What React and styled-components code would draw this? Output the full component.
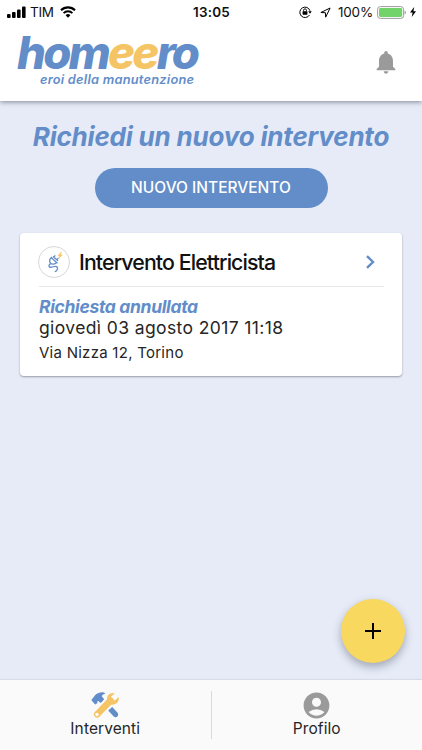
import React from 'react';
import styled, { createGlobalStyle, ThemeProvider } from 'styled-components';
import { MdNotifications, MdAccountCircle } from 'react-icons/md';

const theme = {
  color: {
    primary: '#628dc9',
    accent: '#f5c464',
    fab: '#f9d85f',
    background: '#e6ebf7',
    grey: '#9a9a9a',
    text: '#262626'
  }
};

const GlobalStyle = createGlobalStyle`
  *, *::before, *::after {
    box-sizing: border-box;
  }

  body {
    margin: 0;
    font-family: Inter, 'Liberation Sans', sans-serif;
    overflow: hidden;
  }
`;

const Screen = styled.div`
  width: 422px;
  height: 750px;
  display: flex;
  flex-direction: column;
  position: relative;
  background-color: ${({ theme }) => theme.color.background};
  color: ${({ theme }) => theme.color.text};
`;

const StyledHeader = styled.header`
  height: 101px;
  flex-shrink: 0;
  background-color: #fff;
  box-shadow: 0 1px 5px rgba(60, 65, 85, 0.6);
`;

const StatusBar = styled.div`
  height: 24px;
  padding: 0 6px 0 7px;
  display: grid;
  grid-template-columns: 1fr auto 1fr;
  align-items: center;
  color: #111;
`;

const StatusGroup = styled.div`
  display: flex;
  align-items: center;
  justify-content: ${({ $end }) => ($end ? 'flex-end' : 'flex-start')};
`;

const StatusText = styled.span`
  font-size: 13.5px;
  line-height: 24px;
  font-weight: ${({ $bold }) => ($bold ? 600 : 400)};
  letter-spacing: ${({ $spacing }) => $spacing || '0'};
  margin: ${({ $margin }) => $margin || '0'};
`;

const StatusIcon = styled.svg`
  display: block;
  flex-shrink: 0;
  margin-right: ${({ $gap }) => $gap || 0}px;
`;

const Brand = styled.div`
  height: 77px;
  display: flex;
  justify-content: space-between;
  align-items: flex-start;
  padding: 0 22px 0 14px;
`;

const Logo = styled.svg`
  display: block;
  font-family: Inter, sans-serif;
  font-style: italic;
  font-feature-settings: 'cv11';
  fill: ${({ theme }) => theme.color.primary};
`;

const LogoName = styled.text`
  font-size: 45.5px;
  font-weight: 800;
`;

const LogoAccent = styled.tspan`
  fill: ${({ theme }) => theme.color.accent};
`;

const LogoClaim = styled.text`
  font-size: 12.8px;
  font-weight: 600;
`;

const BellIcon = styled(MdNotifications)`
  width: 28px;
  height: 28px;
  margin-top: 24px;
  color: ${({ theme }) => theme.color.grey};
`;

const Content = styled.main`
  flex: 1;
  display: flex;
  flex-direction: column;
  align-items: center;
  padding: 18px 20px 0;
`;

const Heading = styled.h1`
  margin: 0 0 13.5px;
  font-size: 26px;
  line-height: 35px;
  font-weight: 700;
  font-style: italic;
  letter-spacing: -0.2px;
  white-space: nowrap;
  color: ${({ theme }) => theme.color.primary};
`;

const PrimaryButton = styled.button`
  width: 233px;
  height: 40.5px;
  padding: 0;
  border: none;
  border-radius: 21px;
  background-color: ${({ theme }) => theme.color.primary};
  color: #fff;
  font: 500 15.5px/40px Inter, sans-serif;
  letter-spacing: 0;
`;

const Card = styled.article`
  width: 382px;
  height: 142.5px;
  margin: 25px 0 0;
  padding: 0 18px 0 19px;
  border-radius: 4px;
  background-color: #fff;
  box-shadow: 0 1px 2px rgba(50, 55, 70, 0.45);
`;

const CardHeader = styled.div`
  height: 54px;
  padding: 5px 8px 0 0;
  display: flex;
  align-items: center;
  border-bottom: 1px solid #e6e6e6;
`;

const CategoryBadge = styled.div`
  width: 32px;
  height: 32px;
  margin: 0 9px 0 -1px;
  border: 1px solid #d8d8d8;
  border-radius: 50%;
  flex-shrink: 0;
`;

const CardTitle = styled.h2`
  flex: 1;
  margin: 0;
  font-size: 21.3px;
  line-height: 30px;
  font-weight: 500;
  letter-spacing: -0.88px;
  white-space: nowrap;
  color: #111;
`;

const RequestStatus = styled.p`
  margin: 9px 0 0;
  font-size: 17.5px;
  line-height: 21px;
  font-weight: 700;
  font-style: italic;
  letter-spacing: -0.34px;
  color: ${({ theme }) => theme.color.primary};
`;

const RequestDate = styled.p`
  margin: 0;
  font-size: 17.5px;
  line-height: 22px;
  letter-spacing: 0.39px;
`;

const RequestAddress = styled.p`
  margin: 2px 0 0;
  font-size: 15px;
  line-height: 23px;
  letter-spacing: 0.26px;
`;

const Fab = styled.button`
  position: absolute;
  right: 17.5px;
  bottom: 87.5px;
  width: 64px;
  height: 64px;
  padding: 0;
  display: flex;
  align-items: center;
  justify-content: center;
  border: none;
  border-radius: 50%;
  background-color: ${({ theme }) => theme.color.fab};
  box-shadow: 0 4px 8px rgba(60, 65, 85, 0.4);
`;

const TabBar = styled.nav`
  height: 70px;
  flex-shrink: 0;
  display: flex;
  align-items: center;
  position: relative;
  background-color: #fafafa;
  box-shadow: 0 -1px 1px rgba(90, 90, 110, 0.1);
`;

const Tab = styled.a`
  flex: 1;
  height: 70px;
  padding-top: 11px;
  display: flex;
  flex-direction: column;
  align-items: center;
`;

const TabDivider = styled.span`
  width: 1px;
  height: 48px;
  background-color: #d9d9d9;
`;

const TabLabel = styled.span`
  margin-top: -1px;
  font-size: 15.5px;
  line-height: 20px;
  letter-spacing: ${({ $spacing }) => $spacing};
`;

const ProfileIcon = styled(MdAccountCircle)`
  width: 31px;
  height: 31px;
  margin: -1px 0 -1px;
  color: ${({ theme }) => theme.color.grey};
`;

const SignalIcon = () => (
  <StatusIcon width="20" height="12" viewBox="0 0 20 12" fill="#000" $gap={3}>
    <rect x="0" y="8" width="3.6" height="4" rx="1" />
    <rect x="5" y="6" width="3.6" height="6" rx="1" />
    <rect x="10" y="3.5" width="3.6" height="8.5" rx="1" />
    <rect x="15" y="0.5" width="3.6" height="11.5" rx="1" />
  </StatusIcon>
);

const WifiIcon = () => (
  <StatusIcon width="16" height="12" viewBox="0 0 16 12" fill="none" stroke="#000">
    <path d="M1 4.3a10 10 0 0 1 14 0" strokeWidth="2.2" />
    <path d="M3.6 7.1a6.2 6.2 0 0 1 8.8 0" strokeWidth="2" />
    <path d="M8 11.8 5.6 9.3a3.4 3.4 0 0 1 4.8 0z" fill="#000" stroke="none" />
  </StatusIcon>
);

const RotationLockIcon = () => (
  <StatusIcon width="13" height="12" viewBox="0 0 13 12" fill="none" $gap={8}>
    <path d="M10.5 9A5.2 5.2 0 1 1 11 4.8" stroke="#000" strokeWidth="1" />
    <path d="M9.2 5.3h3.6L11 7.8z" fill="#000" />
    <path d="M4.6 5.5V4.2a1.4 1.4 0 0 1 2.8 0v1.3" stroke="#000" strokeWidth="0.9" />
    <rect x="3.6" y="5.2" width="4.8" height="3.5" rx="0.4" fill="#000" />
  </StatusIcon>
);

const LocationIcon = () => (
  <StatusIcon width="11" height="11" viewBox="0 0 11 11" fill="none" $gap={7}>
    <path
      d="M0.9 5.5 10.1 1 5.7 10.2 5.4 5.7z"
      stroke="#000"
      strokeWidth="1"
      strokeLinejoin="round"
    />
  </StatusIcon>
);

const BatteryIcon = () => (
  <StatusIcon width="29" height="13" viewBox="0 0 29 13" $gap={4}>
    <rect x="0.6" y="0.6" width="26" height="11.8" rx="2.8" fill="#fff" stroke="#9b9b9b" />
    <rect x="2" y="2" width="23.2" height="9" rx="1.4" fill="#72d36b" />
    <path d="M27.6 4.6a2 2 0 0 1 0 3.8z" fill="#9b9b9b" />
  </StatusIcon>
);

const ChargingIcon = () => (
  <StatusIcon width="6" height="10" viewBox="0 0 6 10">
    <path d="M4.2 0 0 5.6h2.6L1.8 10 6 4.2H3.4z" fill="#000" />
  </StatusIcon>
);

const PlugIcon = () => (
  <svg width="30" height="30" viewBox="0 0 30 30" fill="none" stroke="#628dc9" strokeWidth="1.3">
    <path d="m12 10.6 6.5 5.6M13.1 10c-2.2 1.6-3 4.1-1.8 6 1.5 1.8 4.6 1.5 6.4-.6M14 9.4l5 4.4M15 10.1l1.2-1.8M17.9 12.6l1.6-1.6" />
    <path d="M11.6 16.6c-1.7.9-2.2 2.8-.9 3.5 2.1.9 5.2-1.8 7-.5 1.8 1.5.4 4.5-2 5" />
    <path d="M22.3 4.9 18.9 9h1.9l-1 2.7 3.5-3.9h-1.9z" fill="#f5c464" stroke="#f5c464" strokeWidth="0.5" />
  </svg>
);

const ToolsIcon = () => (
  <svg width="30" height="29" viewBox="0 0 30 29">
    <path
      d="M2.5 10.4 1.3 9 3.2 6.8C5 3.6 8 1.4 12 1.3c1.7 0 2.9.6 3.2 1.6-2-.1-3.2.9-3.4 2.4l2.4 3-3.4 3.6-2.6-2-1 .6.3 1.4-2.3 1.7z"
      fill="#628dc9"
    />
    <path d="m18.2 19.6 4-3.6 5.2 5.6c1 1.2 1 3 0 4s-2.8.9-3.9-.3z" fill="#628dc9" />
    <path d="M7.2 23.3 20.5 9.6" stroke="#f5c464" strokeWidth="6.6" strokeLinecap="round" />
    <path
      d="M24.6 2.2c-4.2-1-8 2.1-7.5 6.4.4 3.5 3.2 5.3 6.2 5 3.7-.4 6.2-3.6 5.3-7.6l-3.7 3.6-3-.6-.9-3.2z"
      fill="#f5c464"
    />
    <circle cx="7" cy="23.5" r="1.7" fill="#fafafa" />
  </svg>
);

const Header = () => (
  <StyledHeader>
    <StatusBar>
      <StatusGroup>
        <SignalIcon />
        <StatusText $margin="0 6px 0 0" $spacing="-0.3px">
          TIM
        </StatusText>
        <WifiIcon />
      </StatusGroup>
      <StatusText $bold $spacing="0.2px">
        13:05
      </StatusText>
      <StatusGroup $end>
        <RotationLockIcon />
        <LocationIcon />
        <StatusText $margin="0 4px 0 0" $spacing="-0.2px">
          100%
        </StatusText>
        <BatteryIcon />
        <ChargingIcon />
      </StatusGroup>
    </StatusBar>
    <Brand>
      <Logo width="190" height="70" viewBox="14 24 190 70">
        <LogoName x="17" y="69.4" textLength="183" lengthAdjust="spacing">
          hom<LogoAccent>ee</LogoAccent>ro
        </LogoName>
        <LogoClaim x="40" y="83.5" textLength="154" lengthAdjust="spacing">
          eroi della manutenzione
        </LogoClaim>
      </Logo>
      <BellIcon />
    </Brand>
  </StyledHeader>
);

const RequestCard = ({ title, status, date, address }) => (
  <Card>
    <CardHeader>
      <CategoryBadge>
        <PlugIcon />
      </CategoryBadge>
      <CardTitle>{title}</CardTitle>
      <svg width="10" height="14" viewBox="0 0 10 14" fill="none" stroke="#628dc9" strokeWidth="2.4">
        <path d="m1 1.1 6 5.9-6 5.9" />
      </svg>
    </CardHeader>
    <RequestStatus>{status}</RequestStatus>
    <RequestDate>{date}</RequestDate>
    <RequestAddress>{address}</RequestAddress>
  </Card>
);

const App = () => {
  return (
    <ThemeProvider theme={theme}>
      <GlobalStyle />
      <Screen>
        <Header />
        <Content>
          <Heading>Richiedi un nuovo intervento</Heading>
          <PrimaryButton>NUOVO INTERVENTO</PrimaryButton>
          <RequestCard
            title="Intervento Elettricista"
            status="Richiesta annullata"
            date="giovedì 03 agosto 2017 11:18"
            address="Via Nizza 12, Torino"
          />
        </Content>
        <TabBar>
          <Tab>
            <ToolsIcon />
            <TabLabel $spacing="0.1px">Interventi</TabLabel>
          </Tab>
          <TabDivider />
          <Tab>
            <ProfileIcon />
            <TabLabel $spacing="0.1px">Profilo</TabLabel>
          </Tab>
        </TabBar>
        <Fab aria-label="Nuovo">
          <svg width="16" height="16" viewBox="0 0 16 16" stroke="#000" strokeWidth="2">
            <path d="M8 0v16M0 8h16" />
          </svg>
        </Fab>
      </Screen>
    </ThemeProvider>
  );
};

export default App;
